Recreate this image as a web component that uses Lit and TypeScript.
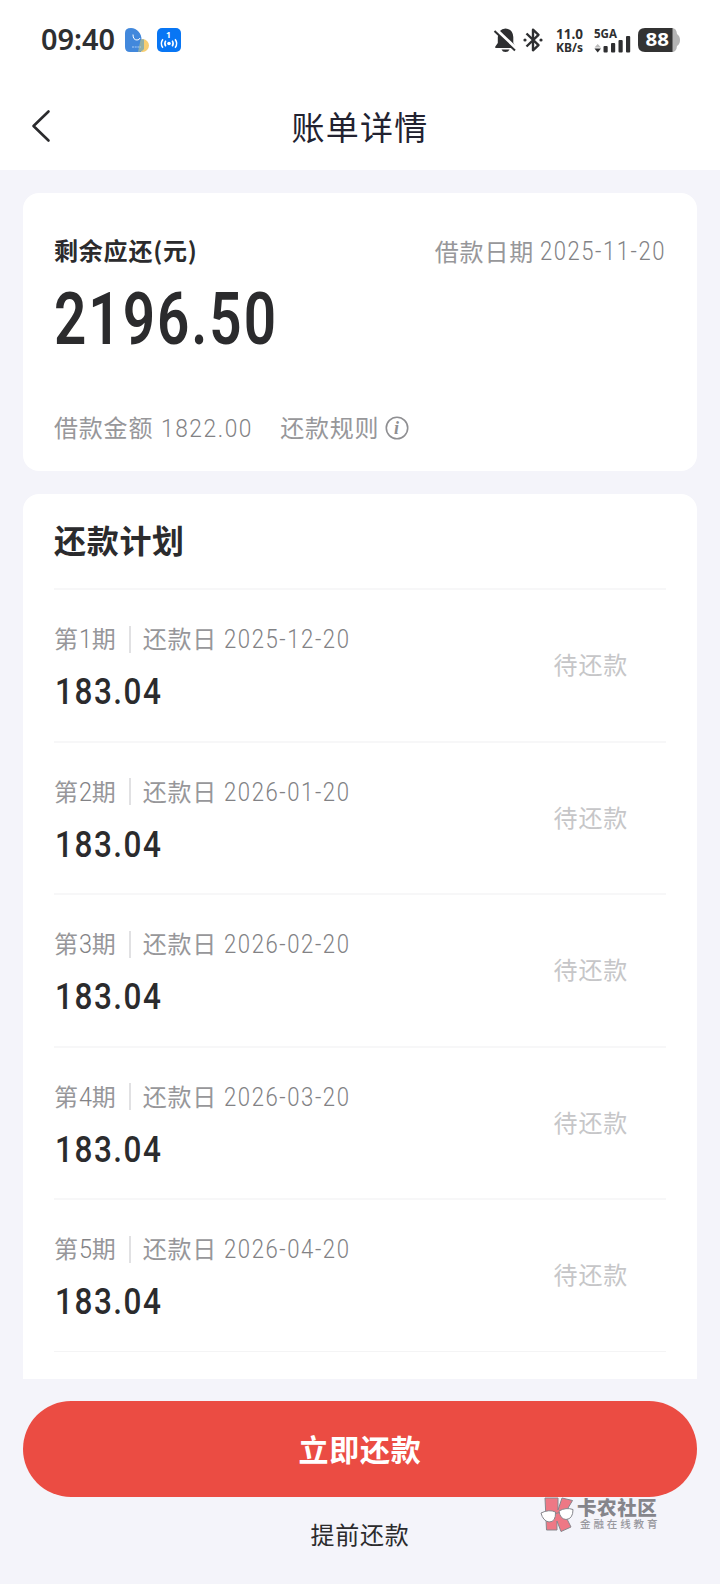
import { LitElement, html, css, svg } from 'lit';
import { customElement, property } from 'lit/decorators.js';

interface Period {
  no: number;
  date: string;
  amount: string;
}

// Figures set to a fixed width, so that columns stay narrow like a DIN face
@customElement('din-text')
class DinText extends LitElement {
  @property({ type: String }) text = '';
  @property({ type: Number }) width = 0;
  @property({ type: Number }) size = 24;

  static styles = css`
    :host {
      display: block;
      flex: none;
      letter-spacing: var(--din-spacing, 0);
    }

    svg {
      display: block;
      overflow: visible;
    }

    text {
      font-family: var(--din-family, Roboto), 'Liberation Sans', sans-serif;
      fill: currentColor;
    }
  `;

  render() {
    const cap = this.size * 0.711;
    return html`
      <svg width=${this.width} height=${cap}>
        ${svg`<text y=${cap} font-size=${this.size} textLength=${this.width} lengthAdjust="spacingAndGlyphs">${this.text}</text>`}
      </svg>
    `;
  }
}

@customElement('status-bar')
class StatusBar extends LitElement {
  static styles = css`
    :host {
      --din-family: 'Noto Sans';
      display: flex;
      align-items: flex-start;
      height: 80px;
      padding: 28px 40px 0 40px;
      box-sizing: border-box;
      color: #2e2f31;
      font-weight: 700;
      letter-spacing: 0;
    }

    svg {
      display: block;
      flex: none;
      overflow: visible;
    }

    .time {
      margin: 2px 0 0 1px;
      font-weight: 600;
    }

    .apps {
      display: flex;
      gap: 8px;
      margin-left: 8px;
    }

    .icons {
      display: flex;
      gap: 7px;
      margin-left: auto;
    }

    .speed {
      display: flex;
      flex-direction: column;
      gap: 4.500px;
      margin: 1px 4px 0 6px;
    }

    .signal text,
    .battery text,
    .hotspot text {
      font-family: 'Noto Sans', 'Liberation Sans', sans-serif;
      font-weight: 700;
    }
  `;

  render() {
    return html`
      <din-text class="time" text="09:40" width="74" size="28"></din-text>
      <div class="apps">
        <svg width="26" height="24" viewBox="0 0 26 24">
          <circle cx="19.500" cy="17.500" r="6.500" fill="#f7ce72" />
          <path d="M2 5Q2 0 8 0C14 0 19 6 18.500 12L18 24H7Q2 24 2 19Z" fill="#4288dc" />
          <path d="M15 24L17.500 12Q19 11 21 11.400V21Q19 24 15 24Z" fill="#8faea8" />
          <path d="M10 6.500Q10 12 14 12Q16.500 12 17 10" fill="none" stroke="#fff" stroke-width="1" />
          <path d="M9 19H18" stroke="#a9ccf5" stroke-width="1" stroke-dasharray="2 .7" />
        </svg>
        <svg class="hotspot" width="24" height="24" viewBox="0 0 24 24">
          <rect width="24" height="24" rx="5" fill="#0876f4" />
          <text x="11.500" y="10" font-size="8.500" text-anchor="middle" fill="#fff">1</text>
          <circle cx="12" cy="15.500" r="1.800" fill="#fff" />
          <path d="M8.800 12.600Q6.800 15.500 8.800 18.400M15.200 12.600Q17.200 15.500 15.200 18.400M5.900 11.200Q2.700 15.500 5.900 19.800M18.100 11.200Q21.300 15.500 18.100 19.800"
            fill="none" stroke="#fff" stroke-width="1.500" />
        </svg>
      </div>
      <div class="icons">
        <svg width="22" height="24" viewBox="0 0 22 24">
          <path d="M2 20Q.8 20 1.200 18.800L3.800 15V9Q4.200 1 11.500 .5Q18.800 1 19.300 9V15L21.500 18.800Q22 20 20.500 20Z" fill="currentColor" />
          <path d="M7.500 21.500H15.500Q14.500 24 11.500 24Q8.500 24 7.500 21.500Z" fill="currentColor" />
          <path d="M2 1.500L23 21.500" stroke="#fff" stroke-width="3.500" />
          <path d="M.5 3L21 22.500" stroke="currentColor" stroke-width="2" />
        </svg>
        <svg width="20" height="24" viewBox="0 0 20 24">
          <path d="M3.500 5.500L15.500 17.200L10 22.300V1.700L15.500 6.800L3.500 18.500" fill="none" stroke="currentColor" stroke-width="2.400" stroke-linejoin="round" />
          <circle cx="2" cy="12" r="1.600" fill="currentColor" />
          <circle cx="18" cy="12" r="1.600" fill="currentColor" />
        </svg>
        <div class="speed">
          <din-text text="11.0" width="27" size="13.500"></din-text>
          <din-text text="KB/s" width="27" size="13"></din-text>
        </div>
        <svg class="signal" width="37" height="25" viewBox="0 0 37 25">
          <text x="0" y="9.500" font-size="11.500" textLength="23" lengthAdjust="spacingAndGlyphs" fill="currentColor">5GA</text>
          <path d="M.5 19.500L3.700 16L7 19.500Z" fill="#bbb" />
          <path d="M.5 20.500L3.700 24.500L7 20.500Z" fill="currentColor" />
          <g fill="currentColor">
            <rect x="9.500" y="18" width="4.200" height="6.500" rx="1" />
            <rect x="17" y="15" width="4.200" height="9.500" rx="1" />
            <rect x="24.500" y="12" width="4.200" height="12.500" rx="1" />
            <rect x="32" y="8" width="4.200" height="16.500" rx="1" />
          </g>
        </svg>
        <svg class="battery" width="42" height="24" viewBox="0 0 42 24">
          <path d="M34 0Q38.500 0 39 6Q42 8 42 12Q42 16 39 18Q38.500 24 34 24Z" fill="#b5b5b5" />
          <path d="M7 0H34.500V24H7Q0 24 0 17V7Q0 0 7 0Z" fill="#333" />
          <text x="7.500" y="18.300" font-size="17.500" textLength="23.500" lengthAdjust="spacingAndGlyphs" fill="#fff">88</text>
        </svg>
      </div>
    `;
  }
}

@customElement('plan-row')
class PlanRow extends LitElement {
  @property({ type: Object }) period!: Period;

  static styles = css`
    :host {
      display: flex;
      justify-content: space-between;
      height: 152.500px;
      padding-right: 38px;
      border-top: 2px solid #f7f7f8;
      box-sizing: border-box;
    }

    .meta {
      display: flex;
      align-items: center;
      height: 28px;
      margin-top: 35px;
      color: #97979a;
    }

    .meta span {
      line-height: 28px;
      margin-top: -2px;
    }

    .meta din-text {
      padding-top: 1px;
      color: #828285;
      font-weight: 300;
    }

    .divider {
      width: 2px;
      height: 27px;
      margin: 0 12px 0 12px;
      background: #e1e1e3;
    }

    .date {
      --din-spacing: 1.8px;
      margin-left: 7px;
    }

    .amount {
      --din-spacing: 1.8px;
      margin: 25px 0 0 1px;
      color: #2b2b2d;
      font-weight: 500;
    }

    .state {
      margin-top: 58px;
      line-height: 32px;
      color: #c6c6c8;
    }
  `;

  render() {
    const { no, date, amount } = this.period;
    return html`
      <div>
        <div class="meta">
          <span>第</span>
          <din-text text=${no} width="13" size="25.500"></din-text>
          <span>期</span>
          <div class="divider"></div>
          <span>还款日</span>
          <din-text class="date" text=${date} width="126.500" size="25.500"></din-text>
        </div>
        <din-text class="amount" text=${amount} width="107.500" size="37"></din-text>
      </div>
      <span class="state">待还款</span>
    `;
  }
}

@customElement('app-root')
class AppRoot extends LitElement {
  @property({ type: Array }) periods: Period[] = [
    { no: 1, date: '2025-12-20', amount: '183.04' },
    { no: 2, date: '2026-01-20', amount: '183.04' },
    { no: 3, date: '2026-02-20', amount: '183.04' },
    { no: 4, date: '2026-03-20', amount: '183.04' },
    { no: 5, date: '2026-04-20', amount: '183.04' }
  ];

  static styles = css`
    :host {
      display: flex;
      flex-direction: column;
      position: relative;
      width: 720px;
      height: 1584px;
      overflow: hidden;
      background: #f4f4fa;
      color: #2b2b2d;
      font-family: 'Noto Sans CJK SC', sans-serif;
      font-size: 24px;
      letter-spacing: 0.8px;
      white-space: nowrap;
    }

    .top {
      flex: none;
      height: 170px;
      background: #fff;
    }

    .nav {
      display: grid;
      grid-template-columns: 80px 1fr 80px;
      align-items: center;
      height: 92px;
    }

    .back {
      display: block;
      margin-left: 31px;
    }

    .title {
      margin: 0;
      text-align: center;
      font-size: 33px;
      font-weight: 400;
      letter-spacing: 1.2px;
      line-height: 50px;
      color: #222230;
    }

    .card {
      margin: 0 23px;
      padding: 0 31px;
      box-sizing: border-box;
      background: #fff;
      border-radius: 16px;
    }

    .summary {
      flex: none;
      height: 278px;
      margin-top: 23px;
      padding-top: 38px;
    }

    .summary-head {
      display: flex;
      justify-content: space-between;
      height: 38px;
      line-height: 38px;
    }

    .label {
      font-weight: 700;
    }

    .muted {
      display: flex;
      align-items: center;
      color: #97979a;
    }

    .muted din-text {
      --din-spacing: 1.8px;
      padding-top: 1px;
      color: #828285;
      font-weight: 300;
    }

    .loan-date {
      gap: 6px;
      margin-top: 2px;
    }

    .total {
      --din-spacing: 2.5px;
      margin: 24px 0 0 0;
      font-weight: 600;
    }

    .summary-foot {
      height: 36px;
      margin-top: 65px;
    }

    .loan-amount {
      margin: 0 27px 0 8px;
    }

    .info {
      margin: 2px 0 0 6px;
    }

    .info text {
      font-family: 'Liberation Serif', serif;
      font-style: italic;
      font-weight: 700;
    }

    .plan {
      flex: none;
      height: 885px;
      margin-top: 23px;
      border-radius: 16px 16px 0 0;
      overflow: hidden;
    }

    .plan h2 {
      margin: 0;
      height: 94px;
      line-height: 91px;
      font-size: 32px;
      font-weight: 700;
      letter-spacing: 0.7px;
    }

    .end {
      height: 1px;
      background: #f4f4f5;
    }

    .actions {
      display: flex;
      flex-direction: column;
      padding: 22px 23px 0;
    }

    button {
      border: 0;
      padding: 0;
      background: none;
      font: inherit;
      color: inherit;
      letter-spacing: inherit;
    }

    .actions .pay {
      height: 96px;
      padding-bottom: 3px;
      border-radius: 48px;
      background: #eb4c43;
      color: #fff;
      font-size: 30px;
      font-weight: 700;
    }

    .actions .early {
      height: 48px;
      margin-top: 12px;
    }

    .watermark {
      position: absolute;
      left: 540px;
      top: 1497px;
      display: flex;
      gap: 3px;
      color: #85858b;
      line-height: 1;
    }

    .brand {
      font-size: 19.500px;
      font-weight: 900;
      letter-spacing: 0.6px;
      line-height: 20px;
    }

    .slogan {
      padding-left: 3px;
      font-size: 10.500px;
      font-weight: 500;
      letter-spacing: 2.900px;
      line-height: 14px;
      color: #98989e;
    }
  `;

  render() {
    return html`
      <div class="top">
        <status-bar></status-bar>
        <div class="nav">
          <svg class="back" width="20" height="34" viewBox="0 0 20 34">
            <path d="M17.500 2.500L2.500 17L17.500 31.500" fill="none" stroke="#2b2b2d" stroke-width="2.600" stroke-linecap="round" stroke-linejoin="round" />
          </svg>
          <h1 class="title">账单详情</h1>
        </div>
      </div>

      <section class="card summary">
        <div class="summary-head">
          <span class="label">剩余应还(元)</span>
          <div class="muted loan-date">
            <span>借款日期</span>
            <din-text text="2025-11-20" width="126" size="25.500"></din-text>
          </div>
        </div>
        <din-text class="total" text="2196.50" width="224" size="71.500"></din-text>
        <div class="muted summary-foot">
          <span>借款金额</span>
          <din-text class="loan-amount" text="1822.00" width="92" size="26.500"></din-text>
          <span>还款规则</span>
          <svg class="info" width="24" height="24" viewBox="0 0 24 24">
            <circle cx="12" cy="12" r="10.700" fill="none" stroke="#8f8f92" stroke-width="1.600" />
            <text x="12" y="17.800" font-size="18" text-anchor="middle" fill="#8f8f92">i</text>
          </svg>
        </div>
      </section>

      <section class="card plan">
        <h2>还款计划</h2>
        ${this.periods.map(period => html`<plan-row .period=${period}></plan-row>`)}
        <div class="end"></div>
      </section>

      <div class="actions">
        <button class="pay">立即还款</button>
        <button class="early">提前还款</button>
      </div>

      <div class="watermark">
        <svg width="34" height="36" viewBox="0 0 34 36">
          <g fill="#ee7885" stroke="#87878d" stroke-width="1">
            <path d="M5 1H18V13L22 1L32.500 3.500L24.500 17L31 30L21 34.500L17 24V33H6.500Z" />
            <path d="M1 16Q9 12 15.500 15Q16 25 9 25Q3 24 1 16Z" fill="#fff" />
            <path d="M19 14Q26 10 33 12.500Q33 22 26 22.500Q20 22 19 14Z" fill="#fff" />
            <path d="M15.500 16.500L19.500 15.500" />
          </g>
        </svg>
        <div>
          <div class="brand">卡农社区</div>
          <div class="slogan">金融在线教育</div>
        </div>
      </div>
    `;
  }
}
